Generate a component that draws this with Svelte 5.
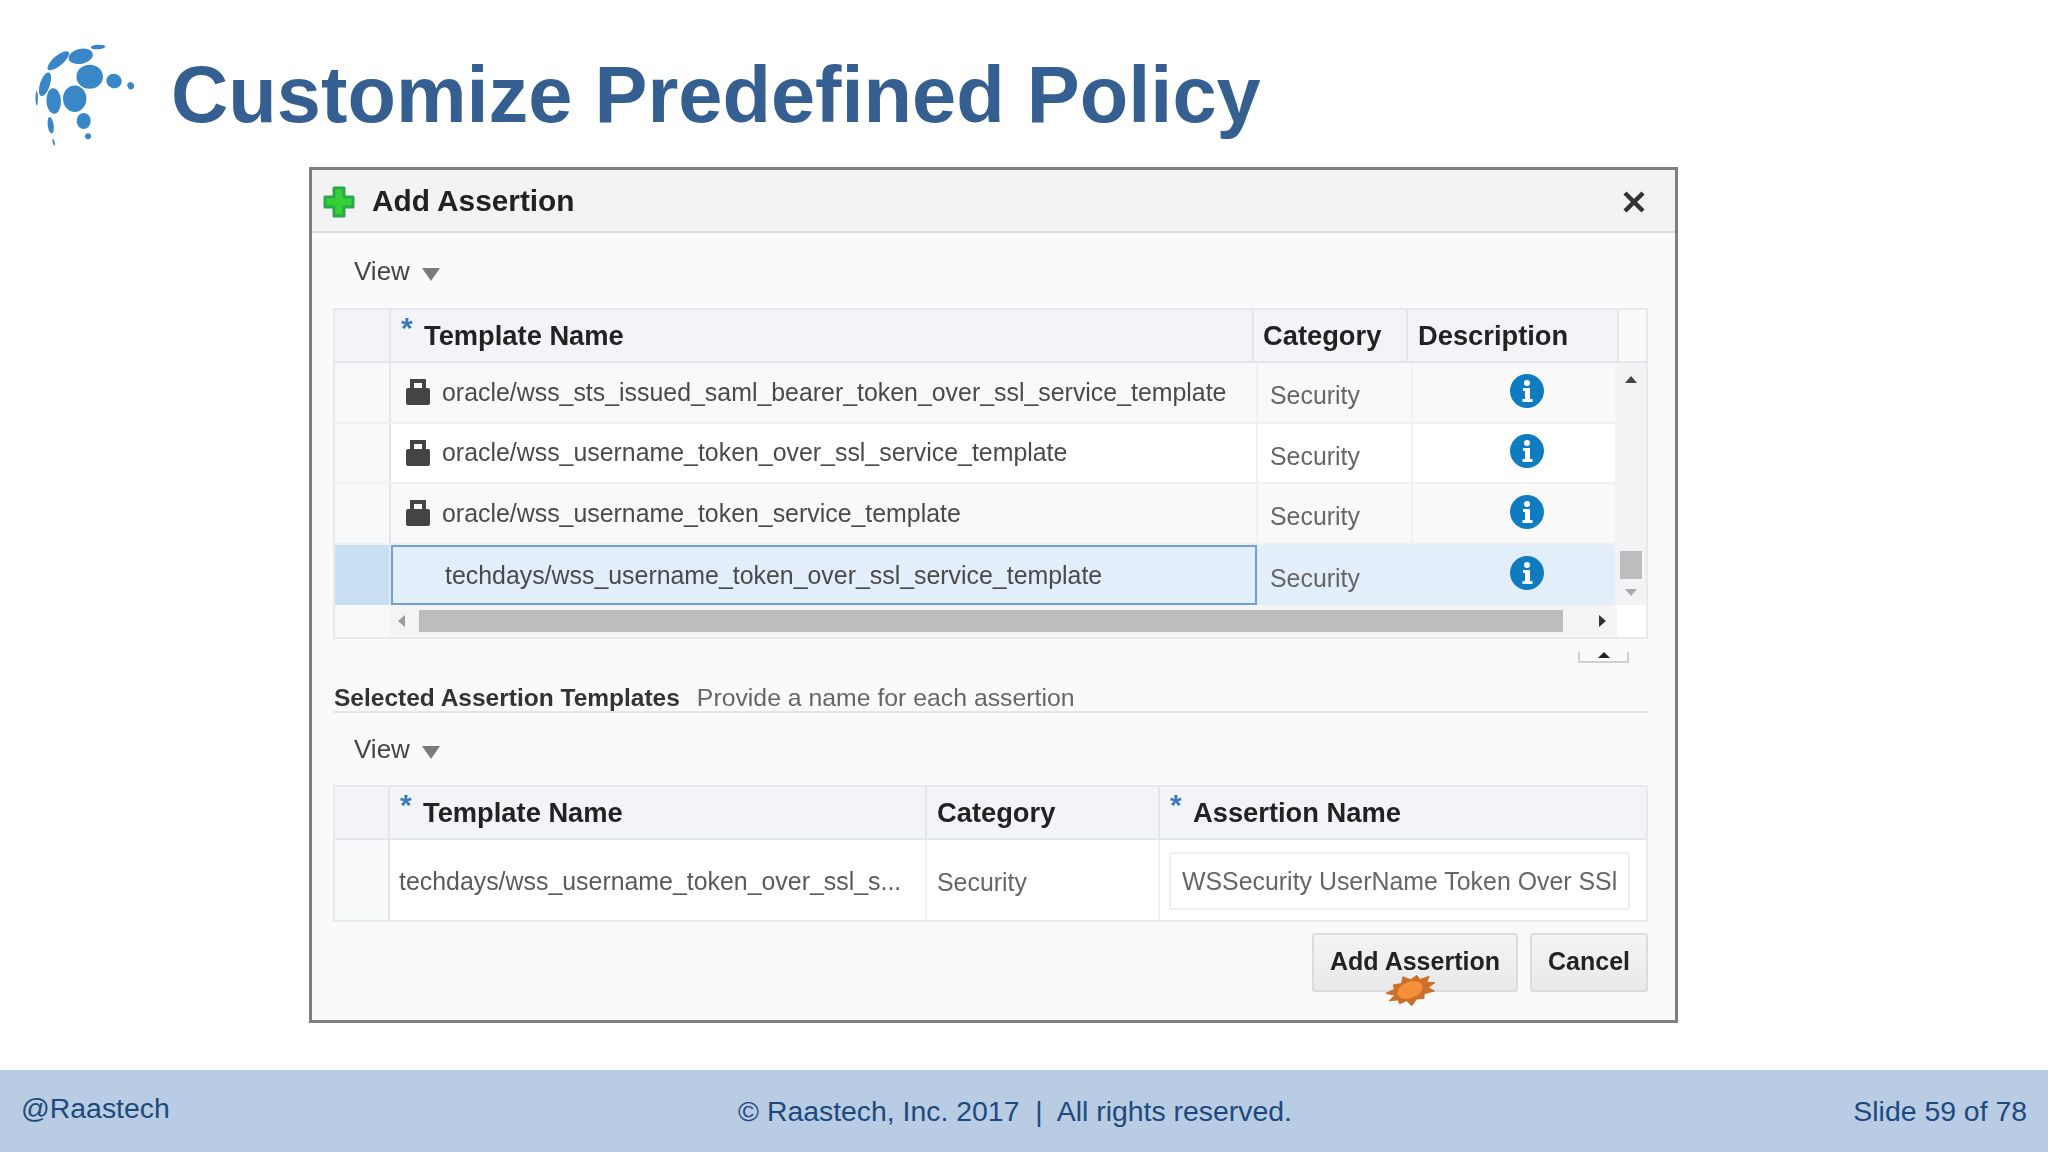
<script>
  const templates = [
    { name: "oracle/wss_sts_issued_saml_bearer_token_over_ssl_service_template", locked: true, hover: true },
    { name: "oracle/wss_username_token_over_ssl_service_template", locked: true },
    { name: "oracle/wss_username_token_service_template", locked: true, hover: true },
    { name: "techdays/wss_username_token_over_ssl_service_template", selected: true }
  ];

  const dots = [
    [98, 47, 7.3, 2.3, -3],
    [80.7, 56.3, 12.3, 7.5, -12],
    [58.3, 60.7, 13.5, 5, -40],
    [89.7, 76.7, 13.3, 12, 0],
    [114, 81, 7.7, 7.3, 20],
    [130.7, 85.7, 3.3, 3.7, -20],
    [45, 84.3, 5, 12.3, 18],
    [53.7, 101, 7.3, 12.7, -3],
    [74.7, 98.7, 11.7, 13.3, 0],
    [83.7, 121, 7, 8, 0],
    [50.7, 125.3, 3, 8.3, -8],
    [88, 136.3, 3, 3, 0],
    [53.7, 142.3, 1, 3.3, -15],
    [36.7, 98.3, 1.2, 7.3, 0]
  ];

  // click marker: spikes round a tilted ellipse
  const spikes = [1, 0.72, 1.05, 0.7, 0.95, 0.74, 1.1, 0.7, 0.92, 0.72, 1, 0.68, 1.05, 0.74, 0.95, 0.7, 1.08, 0.72, 0.96, 0.7, 1.02, 0.72];
  const burst = spikes
    .map((r, i) => {
      const a = (i / spikes.length) * Math.PI * 2;
      const x = Math.cos(a) * 25 * r;
      const y = Math.sin(a) * 14 * r;
      const t = -0.3;
      return `${(25 + x * Math.cos(t) - y * Math.sin(t)).toFixed(1)},${(17 + x * Math.sin(t) + y * Math.cos(t)).toFixed(1)}`;
    })
    .join(" ");
</script>

<div class="slide">
  <header class="slide-head">
    <svg class="logo" width="110" height="110" viewBox="30 40 110 110">
      {#each dots as [cx, cy, rx, ry, rot]}
        <ellipse {cx} {cy} {rx} {ry} transform="rotate({rot} {cx} {cy})" fill="#3a87c8" />
      {/each}
    </svg>
    <h1>Customize Predefined Policy</h1>
  </header>

  <main class="dialog">
    <div class="dialog-title">
      <svg class="plus" width="34" height="34" viewBox="0 0 34 34">
        <path d="M12 3h10v9h9v10h-9v9H12v-9H3V12h9z" fill="#35d035" stroke="#2ca84c" stroke-width="3" stroke-linejoin="round" />
      </svg>
      <span class="dialog-name">Add Assertion</span>
      <svg class="close" width="24" height="24" viewBox="0 0 24 24">
        <path d="M3 3l18 18M21 3L3 21" stroke="#333" stroke-width="4.500" />
      </svg>
    </div>

    <div class="dialog-body">
      <div class="view">View <i class="caret" /></div>

      <div class="table">
        <div class="thead">
          <div class="corner" />
          <div class="th col-name"><span class="star">*</span>Template Name</div>
          <div class="th col-cat">Category</div>
          <div class="th col-desc">Description</div>
          <div class="th-end" />
        </div>
        <div class="tbody">
          <div class="rows">
            {#each templates as t}
              <div class="row" class:hover={t.hover} class:selected={t.selected}>
                <div class="corner" />
                <div class="td col-name">
                  {#if t.locked}
                    <svg class="lock" width="24" height="26" viewBox="0 0 24 26">
                      <path d="M6 10V2h12v8" fill="none" stroke="#444" stroke-width="4" />
                      <rect x="0" y="9" width="24" height="17" rx="2" fill="#444" />
                    </svg>
                  {/if}
                  <span>{t.name}</span>
                </div>
                <div class="td col-cat">Security</div>
                <div class="td col-desc">
                  <svg class="info" width="34" height="34" viewBox="0 0 34 34">
                    <circle cx="17" cy="17" r="17" fill="#0f7cc0" />
                    <circle cx="17" cy="9" r="3" fill="#fff" />
                    <path d="M13 14h7v11h2.500v3h-10v-3H15v-8h-2z" fill="#fff" />
                  </svg>
                </div>
              </div>
            {/each}
          </div>
          <div class="vscroll">
            <i class="arrow up" />
            <div class="vthumb" />
            <i class="arrow down" />
          </div>
        </div>
        <div class="hscroll">
          <div class="corner" />
          <div class="htrack">
            <i class="arrow left" />
            <div class="hthumb" />
            <i class="arrow right" />
          </div>
          <div class="hscroll-end" />
        </div>
      </div>

      <div class="splitter"><i /></div>

      <div class="section">
        <strong>Selected Assertion Templates</strong>
        <span>Provide a name for each assertion</span>
      </div>

      <div class="view view-second">View <i class="caret" /></div>

      <div class="table">
        <div class="thead">
          <div class="corner corner-second" />
          <div class="th sel-name"><span class="star">*</span>Template Name</div>
          <div class="th sel-cat">Category</div>
          <div class="th sel-assert"><span class="star">*</span>Assertion Name</div>
        </div>
        <div class="row row-second">
          <div class="corner corner-second" />
          <div class="td sel-name">techdays/wss_username_token_over_ssl_s...</div>
          <div class="td sel-cat">Security</div>
          <div class="td sel-assert">
            <div class="input">WSSecurity UserName Token Over SSl</div>
          </div>
        </div>
      </div>

      <div class="actions">
        <button type="button" class="add">
          Add Assertion
          <svg class="burst" width="50" height="34" viewBox="0 0 50 34">
            <polygon points={burst} fill="#cc7029" stroke="#cc7029" stroke-width="1" stroke-linejoin="round" />
            <ellipse cx="24" cy="17" rx="13" ry="8" transform="rotate(-20 24 17)" fill="#f4923c" />
          </svg>
        </button>
        <button type="button" class="cancel">Cancel</button>
      </div>
    </div>
  </main>

  <footer class="slide-foot">
    <div class="foot-left">@Raastech</div>
    <div class="foot-mid">© Raastech, Inc. 2017&nbsp; |&nbsp; All rights reserved.</div>
    <div class="foot-right">Slide 59 of 78</div>
  </footer>
</div>

<style>
  :global(body) {
    background: #fff;
  }
  .slide {
    width: 2048px;
    height: 1152px;
    display: flex;
    flex-direction: column;
    font-family: "Liberation Sans", Arial, sans-serif;
    overflow: hidden;
  }
  .slide-head {
    height: 167px;
    box-sizing: border-box;
    padding: 40px 0 0 30px;
    display: flex;
    align-items: flex-start;
    gap: 31px;
    flex-shrink: 0;
  }
  .logo {
    flex-shrink: 0;
  }
  h1 {
    margin: 8px 0 0;
    font-size: 79.4px;
    line-height: 94px;
    font-weight: 700;
    color: #365f91;
    white-space: nowrap;
  }

  .dialog {
    margin-left: 309px;
    width: 1369px;
    height: 856px;
    box-sizing: border-box;
    border: 3px solid #7f7f7f;
    background: #fafafb;
    flex-shrink: 0;
    filter: blur(0.5px);
  }
  .dialog-title {
    height: 63px;
    box-sizing: border-box;
    background: #f3f3f4;
    border-bottom: 2px solid #dcdcdc;
    display: flex;
    align-items: center;
    padding: 0 29px 0 10px;
  }
  .plus {
    flex-shrink: 0;
    margin-top: 2px;
  }
  .dialog-name {
    margin-left: 16px;
    font-size: 29.8px;
    font-weight: 700;
    color: #222;
    flex: 1;
  }
  .close {
    margin-top: 3px;
  }
  .dialog-body {
    padding: 0 27px 0 21px;
  }
  .view {
    height: 75px;
    box-sizing: border-box;
    padding-top: 2px;
    display: flex;
    align-items: center;
    padding-left: 21px;
    font-size: 26px;
    color: #444;
    gap: 12px;
  }
  .view-second {
    height: 72px;
    padding-top: 0;
  }
  .caret {
    width: 0;
    height: 0;
    margin-top: 6px;
    border-left: 9px solid transparent;
    border-right: 9px solid transparent;
    border-top: 13px solid #7b7b7b;
  }

  .table {
    border: 2px solid #e9e9ec;
    background: #fff;
  }
  .thead {
    display: flex;
    height: 51px;
    background: #f3f4f7;
    border-bottom: 2px solid #e4e5e8;
  }
  .corner {
    width: 54px;
    flex-shrink: 0;
    background: #f8f9fb;
    border-right: 2px solid #e4e5e8;
  }
  .thead .corner {
    background: #f3f4f7;
  }
  .th {
    box-sizing: border-box;
    display: flex;
    align-items: center;
    font-size: 27.3px;
    font-weight: 700;
    color: #222;
    border-right: 2px solid #e4e5e8;
    white-space: nowrap;
    flex-shrink: 0;
  }
  .star {
    color: #3d78bd;
    font-size: 30px;
    margin: -16px 10px 0 0;
    width: 13px;
  }
  .col-name {
    width: 863px;
    padding-left: 10px;
  }
  .col-cat {
    width: 154px;
    padding-left: 9px;
  }
  .col-desc {
    width: 211px;
    padding-left: 10px;
  }
  .th-end {
    flex: 1;
    background: #fafafb;
  }

  .tbody {
    display: flex;
  }
  .rows {
    width: 1280px;
    flex-shrink: 0;
  }
  .row {
    display: flex;
    height: 60.5px;
    background: #fff;
    border-bottom: 2px solid #f1f1f3;
    box-sizing: border-box;
  }
  .row.hover {
    background: #f9f9fa;
  }
  .row.selected {
    background: #e2eefa;
    border-bottom: 0;
  }
  .row.selected .corner {
    background: #c9dff2;
  }
  .td {
    box-sizing: border-box;
    display: flex;
    align-items: center;
    font-size: 24.9px;
    color: #4a4a4a;
    white-space: nowrap;
    flex-shrink: 0;
  }
  .rows .td.col-name {
    width: 865px;
    padding: 0 0 0 15px;
    gap: 12px;
  }
  .rows .td.col-cat {
    width: 155px;
    padding: 7px 0 0 12px;
    border-left: 2px solid #f1f1f3;
    color: #666;
  }
  .rows .td.col-desc {
    width: 205px;
    padding: 0 0 3px 97px;
    border-left: 2px solid #f1f1f3;
  }
  .row.selected .td.col-name {
    width: 866px;
    border: 2px solid #6f9fd6;
    padding: 2px 0 0 52px;
  }
  .row.selected .td.col-cat {
    border-left: 0;
    width: 154px;
    padding-left: 13px;
  }
  .row.selected .td.col-desc {
    border-left-color: transparent;
    padding-bottom: 4px;
  }
  .lock {
    flex-shrink: 0;
  }
  .vscroll {
    flex: 1;
    background: #f3f3f5;
    display: flex;
    flex-direction: column;
    align-items: center;
    position: relative;
  }
  .vthumb {
    position: absolute;
    top: 188px;
    left: 5px;
    width: 22px;
    height: 28px;
    background: #bdbdbd;
  }
  .arrow {
    width: 0;
    height: 0;
    display: block;
    border: 6px solid transparent;
  }
  .arrow.up {
    border-top: 0;
    border-bottom: 7px solid #444;
    margin-top: 13px;
  }
  .arrow.down {
    border-bottom: 0;
    border-top: 7px solid #aaa;
    margin-top: auto;
    margin-bottom: 9px;
  }
  .hscroll {
    display: flex;
    height: 32px;
  }
  .hscroll .corner {
    border-right: 0;
  }
  .htrack {
    width: 1228px;
    flex-shrink: 0;
    box-sizing: border-box;
    background: #f4f4f5;
    display: flex;
    align-items: center;
    padding: 0 0 0 9px;
  }
  .arrow.left {
    border-left: 0;
    border-right: 7px solid #999;
  }
  .arrow.right {
    border-right: 0;
    border-left: 7px solid #333;
    margin-left: 36px;
  }
  .hthumb {
    width: 1144px;
    height: 22px;
    margin-left: 14px;
    background: #bdbdbd;
  }
  .hscroll-end {
    flex: 1;
  }

  .splitter {
    width: 47px;
    height: 9px;
    margin: 13px 0 0 1245px;
    border: 2px solid #d0d0d0;
    border-top: 0;
    display: flex;
    justify-content: center;
  }
  .splitter i {
    width: 0;
    height: 0;
    border-left: 6px solid transparent;
    border-right: 6px solid transparent;
    border-bottom: 6px solid #222;
  }
  .section {
    height: 43px;
    box-sizing: border-box;
    margin-top: 7px;
    border-bottom: 2px solid #e6e6e8;
    display: flex;
    align-items: center;
    padding: 15px 0 0 1px;
    gap: 17px;
    font-size: 25px;
    color: #666;
    white-space: nowrap;
  }
  .section strong {
    color: #333;
    font-size: 24.500px;
  }
  .section span {
    font-size: 24.800px;
  }

  .corner-second {
    width: 53px;
  }
  .sel-name {
    width: 537px;
    padding-left: 9px;
  }
  .th.sel-name {
    padding-left: 10px;
  }
  .sel-cat {
    width: 233px;
    padding-left: 10px;
  }
  .sel-assert {
    flex: 1;
    padding-left: 10px;
    border-right: 0;
    flex-shrink: 1;
  }
  .row-second {
    height: 80px;
    border-bottom: 0;
  }
  .row-second .corner {
    background: #f9fafc;
  }
  .row-second .td {
    border-right: 2px solid #f1f1f3;
    color: #5a5a5a;
    padding-top: 2px;
  }
  .row-second .sel-cat {
    color: #666;
    padding-top: 4px;
  }
  .row-second .sel-assert {
    border-right: 0;
    padding-left: 9px;
  }
  .input {
    width: 461px;
    height: 58px;
    box-sizing: border-box;
    border: 2px solid #eeeeef;
    border-radius: 3px;
    display: flex;
    align-items: center;
    padding-left: 11px;
    overflow: hidden;
    color: #666;
  }

  .actions {
    display: flex;
    justify-content: flex-end;
    gap: 12px;
    margin-top: 11px;
  }
  button {
    height: 59px;
    box-sizing: border-box;
    border: 2px solid #dcdcde;
    border-radius: 3px;
    background: linear-gradient(#f4f4f5, #e9e9eb);
    font-family: inherit;
    font-size: 25px;
    font-weight: 700;
    color: #222;
    padding: 0 0 2px;
    flex-shrink: 0;
  }
  .add {
    width: 206px;
    position: relative;
  }
  .cancel {
    width: 118px;
  }
  .burst {
    position: absolute;
    left: 72px;
    top: 38px;
  }

  .slide-foot {
    margin-top: auto;
    height: 82px;
    background: #b8cce4;
    color: #1f497d;
    font-size: 28.4px;
    display: grid;
    grid-template-columns: 1fr auto 1fr;
    align-items: center;
    padding: 0 21px;
    flex-shrink: 0;
  }
  .foot-left {
    margin-bottom: 5px;
  }
  .foot-mid {
    margin-right: 18px;
  }
  .foot-right {
    text-align: right;
  }
</style>
